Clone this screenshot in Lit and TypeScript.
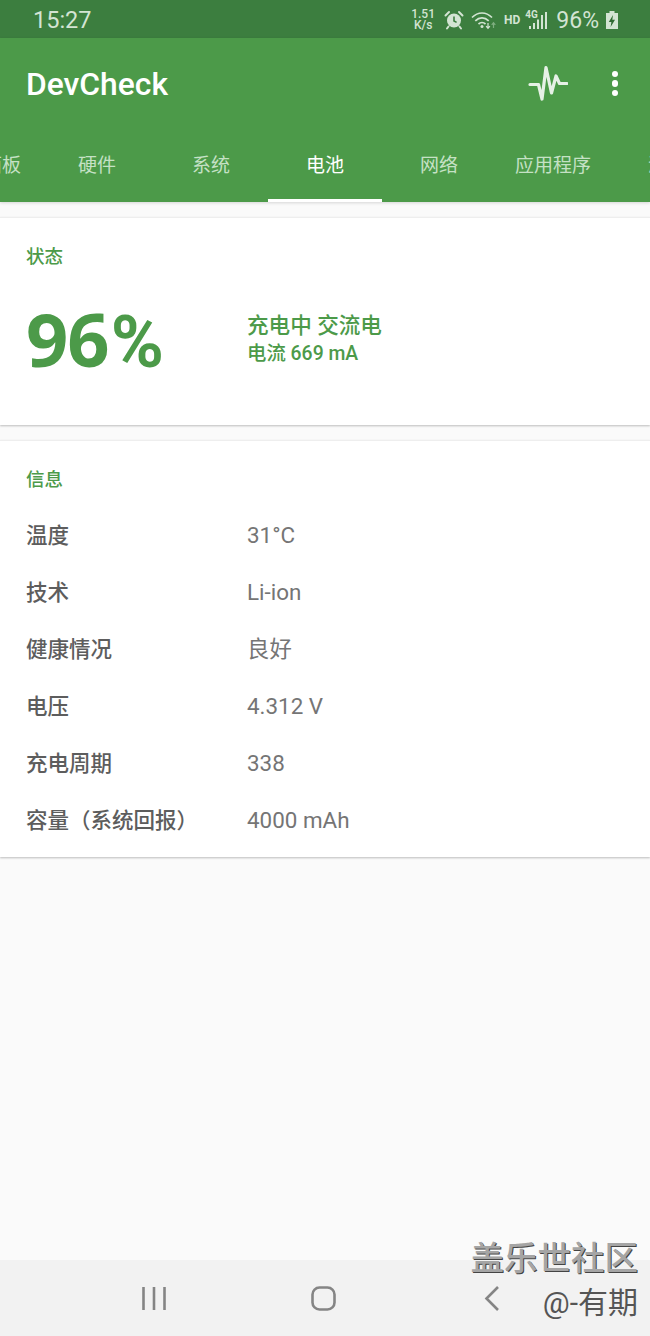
import { LitElement, html, css, svg } from 'lit';
import { customElement } from 'lit/decorators.js';

const TABS = ['仪表面板', '硬件', '系统', '电池', '网络', '应用程序', '测试'];
const ACTIVE_TAB = 3;

const INFO_ROWS = [
  ['温度', '31°C'],
  ['技术', 'Li-ion'],
  ['健康情况', '良好'],
  ['电压', '4.312 V'],
  ['充电周期', '338'],
  ['容量（系统回报）', '4000 mAh'],
];

const alarmIcon = svg`
  <svg width="20" height="20" viewBox="0 0 20 20" fill="none">
    <circle cx="10" cy="10.500" r="7" fill="#d3e4d3"/>
    <path d="M10 6.500v4.500l2.600 1.400" stroke="#3c7e3f" stroke-width="1.6" fill="none"/>
    <path d="M1.500 5.500 5 2M18.500 5.500 15 2" stroke="#d3e4d3" stroke-width="2" stroke-linecap="round"/>
    <path d="M4.500 16.500 3 18.500M15.500 16.500 17 18.500" stroke="#d3e4d3" stroke-width="2" stroke-linecap="round"/>
  </svg>`;

const wifiIcon = svg`
  <svg width="25" height="20" viewBox="0 0 25 20" fill="none">
    <path d="M1 7.500C7 1.500 15 1.500 21 7.500" stroke="#d3e4d3" stroke-width="1.7"/>
    <path d="M4.300 10.800C8.300 7 13.700 7 17.700 10.800" stroke="#d3e4d3" stroke-width="1.7"/>
    <path d="M7.500 14C9.500 12.200 12.500 12.200 14.500 14" stroke="#d3e4d3" stroke-width="1.7"/>
    <circle cx="11" cy="16.500" r="1.500" fill="#d3e4d3"/>
    <path d="M17 13v5M15.100 16.200l1.900 2.200 1.900-2.200" stroke="#d3e4d3" stroke-width="1.2"/>
    <path d="M22.500 18v-5M20.700 14.800l1.800-2.100 1.800 2.100" stroke="#7fae80" stroke-width="1.2"/>
  </svg>`;

const signalIcon = svg`
  <svg width="22" height="20" viewBox="0 0 22 20" fill="#d3e4d3">
    <rect x="4" y="16" width="2" height="3"/>
    <rect x="8" y="13" width="2" height="6"/>
    <rect x="12" y="9.500" width="2" height="9.500"/>
    <rect x="16" y="5" width="2" height="14"/>
    <rect x="20" y="2" width="2" height="17"/>
  </svg>`;

const batteryIcon = svg`
  <svg width="14" height="20" viewBox="0 0 14 20">
    <path d="M4.500 1h5v2H13v16H1V3h3.500z" fill="#d3e4d3"/>
    <path d="M8 5 3.800 12h2.600L5.600 17 10 9.800H7.300z" fill="#2f6a32"/>
  </svg>`;

const pulseIcon = svg`
  <svg width="40" height="40" viewBox="0 0 40 40" fill="none">
    <path d="M2 20.500H10.500L14 35 18 3.500 23.500 29 28 12 31.500 19.500H39" stroke="#e6f1e6" stroke-width="3.2" stroke-linejoin="round" stroke-linecap="round"/>
  </svg>`;

@customElement('app-root')
export class AppRoot extends LitElement {
  static styles = css`
    :host {
      display: flex;
      flex-direction: column;
      height: 1336px;
      overflow: hidden;
      position: relative;
      background: #fafafa;
      font-family: Roboto, "Noto Sans CJK SC", sans-serif;
    }

    .status-bar {
      height: 38px;
      flex: none;
      box-sizing: border-box;
      padding: 2px 31px 0 33px;
      display: flex;
      align-items: center;
      justify-content: space-between;
      background: #3c7e3f;
      color: #d3e4d3;
    }

    .time {
      font-size: 23.500px;
    }

    .status-icons {
      display: flex;
      align-items: center;
    }

    .speed {
      font-size: 12px;
      font-weight: 500;
      line-height: 11.500px;
      text-align: center;
      margin-right: 9px;
    }

    .wifi {
      display: flex;
      margin-left: 7px;
    }

    .hd {
      font-size: 12px;
      font-weight: 700;
      margin: 0 5px 0 8px;
    }

    .signal {
      position: relative;
      display: flex;
      margin-right: 9px;
    }

    .signal span {
      position: absolute;
      left: 0;
      top: 0;
      font-size: 10px;
      font-weight: 700;
      line-height: 10px;
    }

    .percent {
      font-size: 23px;
      margin-right: 6px;
    }

    .app-bar {
      flex: none;
      background: #4c9a49;
      height: 164px;
      display: flex;
      flex-direction: column;
      box-shadow: 0 1px 3px rgba(0, 0, 0, 0.15);
    }

    .toolbar {
      height: 91px;
      display: flex;
      align-items: center;
      padding: 0 32px 0 26px;
    }

    .title {
      flex: 1;
      color: #fff;
      font-size: 31.800px;
      font-weight: 500;
    }

    .more {
      display: flex;
      flex-direction: column;
      gap: 3px;
      margin-left: 44px;
    }

    .more i {
      width: 6.500px;
      height: 6.500px;
      border-radius: 50%;
      background: #fff;
    }

    .tabs {
      flex: 1;
      display: flex;
      margin-left: -74px;
    }

    .tab {
      flex: none;
      width: 114px;
      box-sizing: border-box;
      padding-top: 25px;
      text-align: center;
      color: #c5e1c5;
      font-size: 19px;
      line-height: 24px;
      border-bottom: 3px solid transparent;
      white-space: nowrap;
    }

    .tab.active {
      color: #fff;
      border-bottom-color: #fff;
    }

    .card {
      background: #fff;
      border-top: 1px solid #eeeeee;
      box-shadow: 0 1px 2px rgba(0, 0, 0, 0.25);
      box-sizing: border-box;
      padding: 27px 26px 0;
      margin-top: 15px;
    }

    .card.status {
      height: 208px;
    }

    .card.info {
      height: 417px;
    }

    .heading {
      color: #4c9a49;
      font-size: 18.500px;
      font-weight: 500;
      line-height: 24px;
    }

    .battery {
      display: grid;
      grid-template-columns: 221px 1fr;
      align-items: center;
      margin-top: 24px;
    }

    .level {
      color: #4c9a49;
      font-family: "Noto Sans", sans-serif;
      font-size: 74px;
      font-weight: 700;
      line-height: 92px;
      letter-spacing: -1px;
      white-space: nowrap;
    }

    .level span {
      font-family: Roboto, sans-serif;
      font-size: 72px;
      font-weight: 700;
      letter-spacing: 0;
      margin-left: 2px;
    }

    .charge {
      color: #4c9a49;
      font-weight: 500;
      padding-bottom: 3px;
    }

    .charge div:first-child {
      font-size: 21.600px;
      line-height: 28px;
    }

    .charge div:last-child {
      font-size: 19.400px;
      line-height: 28px;
    }

    .rows {
      margin-top: 14px;
    }

    .row {
      display: grid;
      grid-template-columns: 221px 1fr;
      height: 57px;
      align-items: center;
    }

    .row .label {
      color: #5d5d5d;
      font-size: 21.500px;
      line-height: 24px;
      font-weight: 500;
      white-space: nowrap;
      padding-top: 2px;
    }

    .row .value {
      color: #757575;
      font-size: 22.400px;
      line-height: 24px;
    }

    .spacer {
      flex: 1;
    }

    .nav-bar {
      flex: none;
      height: 76px;
      background: #f2f2f2;
      display: flex;
    }

    .watermark {
      position: absolute;
      right: 12px;
      text-align: right;
      white-space: nowrap;
    }

    .wm-brand {
      bottom: 58px;
      font-size: 33.500px;
      line-height: 38px;
      font-weight: 500;
      color: #a5a5a5;
      text-shadow: 1px 1px 0 #444;
    }

    .wm-user {
      bottom: 15px;
      font-size: 30px;
      line-height: 36px;
      color: #555;
    }
  `;

  render() {
    return html`
      <div class="status-bar">
        <span class="time">15:27</span>
        <div class="status-icons">
          <div class="speed">1.51<br />K/s</div>
          ${alarmIcon}
          <div class="wifi">${wifiIcon}</div>
          <span class="hd">HD</span>
          <div class="signal">${signalIcon}<span>4G</span></div>
          <span class="percent">96%</span>
          ${batteryIcon}
        </div>
      </div>

      <div class="app-bar">
        <div class="toolbar">
          <span class="title">DevCheck</span>
          ${pulseIcon}
          <div class="more"><i></i><i></i><i></i></div>
        </div>
        <div class="tabs">
          ${TABS.map((tab, i) => html`<div class="tab ${i === ACTIVE_TAB ? 'active' : ''}">${tab}</div>`)}
        </div>
      </div>

      <div class="card status">
        <div class="heading">状态</div>
        <div class="battery">
          <div class="level">96<span>%</span></div>
          <div class="charge">
            <div>充电中 交流电</div>
            <div>电流 669 mA</div>
          </div>
        </div>
      </div>

      <div class="card info">
        <div class="heading">信息</div>
        <div class="rows">
          ${INFO_ROWS.map(([label, value]) => html`
            <div class="row">
              <span class="label">${label}</span>
              <span class="value">${value}</span>
            </div>
          `)}
        </div>
      </div>

      <div class="spacer"></div>

      <div class="nav-bar">
        <svg width="650" height="76" viewBox="0 0 650 76" fill="none" stroke="#858585" stroke-width="2.6">
          <path d="M143.500 27v23M154 27v23M164.500 27v23" />
          <rect x="312.500" y="27.500" width="22" height="22" rx="7" />
          <path d="M498 27 486.500 38.500 498 50" />
        </svg>
      </div>

      <div class="watermark wm-brand">盖乐世社区</div>
      <div class="watermark wm-user">@-有期</div>
    `;
  }
}
